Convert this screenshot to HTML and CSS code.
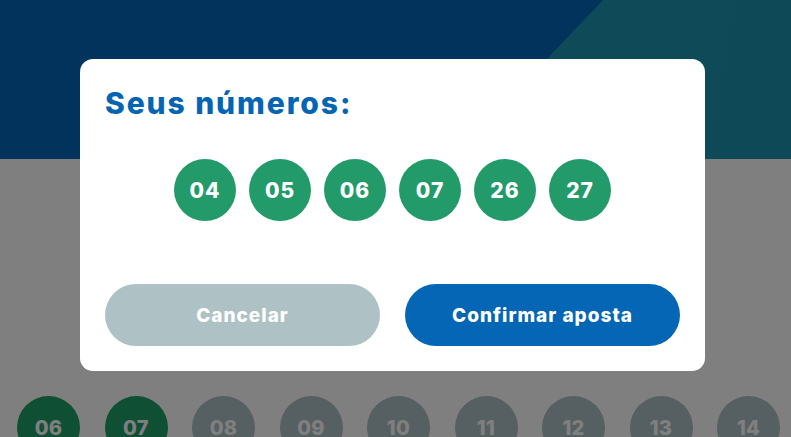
FILE: index.html
```html
<!DOCTYPE html>
<html lang="pt-BR">
<head>
<meta charset="utf-8">
<title>Seus números</title>
<link rel="stylesheet" href="styles.css">
</head>
<body>
<div class="page">
  <header class="hero">
    <div class="hero-accent"></div>
  </header>
  <section class="board">
    <div class="board-row">
      <span class="ball picked">06</span>
      <span class="ball picked">07</span>
      <span class="ball">08</span>
      <span class="ball">09</span>
      <span class="ball">10</span>
      <span class="ball">11</span>
      <span class="ball">12</span>
      <span class="ball">13</span>
      <span class="ball">14</span>
    </div>
  </section>
</div>
<div class="overlay">
  <div class="modal">
    <h2 class="modal-title">Seus números:</h2>
    <div class="chosen">
      <span class="chip">04</span>
      <span class="chip">05</span>
      <span class="chip">06</span>
      <span class="chip">07</span>
      <span class="chip">26</span>
      <span class="chip">27</span>
    </div>
    <div class="actions">
      <button class="btn btn-cancel">Cancelar</button>
      <button class="btn btn-confirm">Confirmar aposta</button>
    </div>
  </div>
</div>
</body>
</html>
```
FILE: styles.css
```css
* { box-sizing: border-box; }
html, body { margin: 0; padding: 0; }
body {
  width: 791px;
  height: 437px;
  overflow: hidden;
  font-family: "Inter", "Open Sans", "Liberation Sans", sans-serif;
  background: #ffffff;
  position: relative;
}
.page { width: 791px; height: 437px; overflow: hidden; display: flex; flex-direction: column; }
.hero {
  height: 159px;
  background: #0466b8;
  position: relative;
  flex: none;
}
.hero-accent {
  position: absolute;
  inset: 0;
  background: linear-gradient(100deg, #1a93ad 0%, #1d96ae 60%, #1b93ae 100%);
  clip-path: polygon(603px 0, 100% 0, 100% 100%, 452px 100%);
}
.board { flex: 1; background: #ffffff; overflow: hidden; }
.board-row {
  display: flex;
  gap: 24.5px;
  padding: 237px 0 0 17px;
}
.ball {
  flex: none;
  width: 63px;
  height: 63px;
  border-radius: 50%;
  background: #adbec5;
  color: #ffffff;
  font-weight: 800;
  font-size: 20px;
  display: flex;
  align-items: center;
  justify-content: center;
  letter-spacing: 0.3px;
}
.ball.picked { background: #1e9e66; }

.overlay {
  position: absolute;
  inset: 0;
  background: rgba(0, 0, 0, 0.5);
  padding: 59px 0 0 80px;
}
.modal {
  width: 625px;
  height: 312px;
  background: #ffffff;
  border-radius: 13px;
  padding: 24px 25px 25px;
  display: flex;
  flex-direction: column;
}
.modal-title {
  margin: 0;
  font-size: 30px;
  line-height: 40px;
  font-weight: 800;
  color: #0565b3;
  letter-spacing: 1.9px;
}
.chosen {
  display: flex;
  justify-content: center;
  gap: 13px;
  margin-top: 36px;
}
.chip {
  width: 62px;
  height: 62px;
  border-radius: 50%;
  background: #229a6a;
  color: #ffffff;
  font-weight: 800;
  font-size: 21px;
  display: flex;
  align-items: center;
  justify-content: center;
  letter-spacing: 1px;
}
.actions {
  display: flex;
  gap: 25px;
  margin-top: 63px;
}
.btn {
  flex: 1;
  height: 62px;
  border: 0;
  border-radius: 31px;
  color: #ffffff;
  font-family: inherit;
  font-weight: 800;
  font-size: 19px;
  letter-spacing: 1px;
  cursor: pointer;
}
.btn-cancel { background: #aec2c5; }
.btn-confirm { background: #0466b4; }
```
